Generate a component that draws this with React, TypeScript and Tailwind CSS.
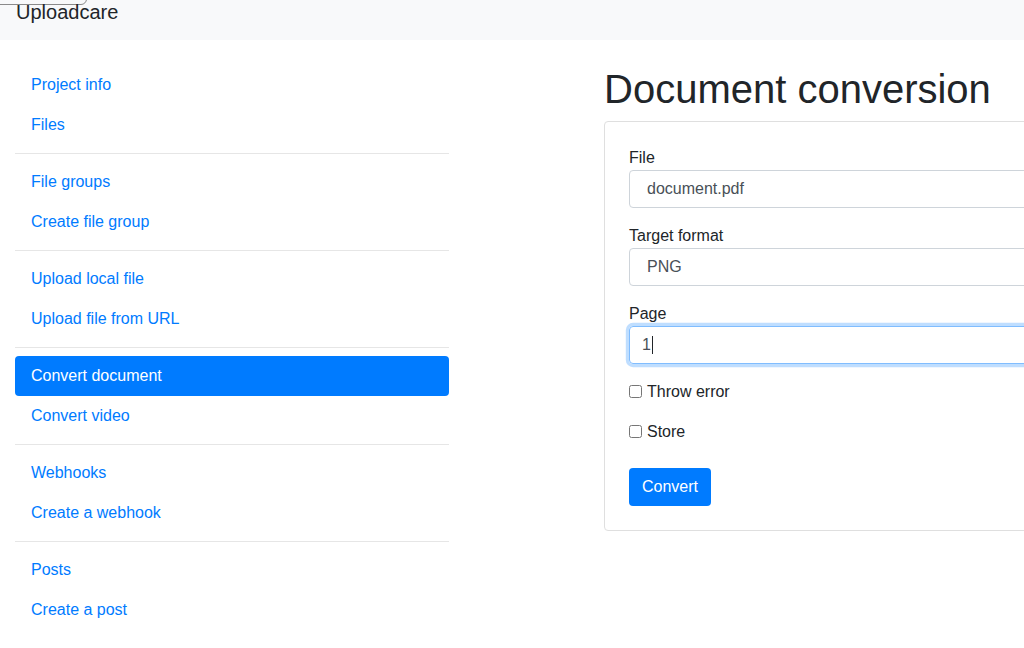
import React from "react";

const groups = [
  ["Project info", "Files"],
  ["File groups", "Create file group"],
  ["Upload local file", "Upload file from URL"],
  ["Convert document", "Convert video"],
  ["Webhooks", "Create a webhook"],
  ["Posts", "Create a post"],
];

const active = "Convert document";

function Sidebar() {
  return (
    <nav className="w-[434px] ml-[15px] shrink-0">
      {groups.map((group, i) => (
        <div key={i}>
          {i > 0 && <hr className="my-2 border-0 border-t border-[#e6e6e6]" />}
          {group.map((label) => (
            <a
              key={label}
              href="#"
              className={
                label === active
                  ? "block px-4 py-2 leading-6 rounded bg-[#007bff] text-white"
                  : "block px-4 py-2 leading-6 rounded text-[#007bff]"
              }
            >
              {label}
            </a>
          ))}
        </div>
      ))}
    </nav>
  );
}

function Field({ label, value, focused }: { label: string; value: string; focused?: boolean }) {
  return (
    <div className="mb-4">
      <div className="leading-6 text-[#212529]">{label}</div>
      <div
        className={
          focused
            ? "h-[38px] flex items-center pl-[12px] border border-[#80bdff] rounded text-[#495057] shadow-[0_0_0_0.2rem_rgba(0,123,255,0.25)]"
            : "h-[38px] flex items-center pl-[17px] border border-[#ced4da] rounded text-[#495057]"
        }
      >
        {value}
        {focused && <span className="ml-[1px] w-px h-[18px] bg-[#212529]" />}
      </div>
    </div>
  );
}

function Check({ label }: { label: string }) {
  return (
    <label className="mb-4 flex items-center gap-[5px] leading-6 text-[#212529]">
      <input type="checkbox" className="relative -top-px w-[13px] h-[13px] m-0" />
      {label}
    </label>
  );
}

export default function App() {
  return (
    <div className="relative w-[1024px] h-[648px] overflow-hidden bg-white font-['Liberation_Sans',Arial,sans-serif] text-base">
      <header className="relative h-10 bg-[#f8f9fa] pl-4">
        <div className="absolute -left-[10px] -top-[30px] w-[97px] h-[35px] border border-[#8a8a8a] rounded-[6px]" />
        <span className="relative -top-[3px] block text-xl leading-[30px] text-[#212529]">Uploadcare</span>
      </header>
      <div className="flex pt-[25px]">
        <Sidebar />
        <main className="ml-[155px] w-[620px] shrink-0">
          <h1 className="text-[40px] leading-[48px] mb-2 text-[#212529]">Document conversion</h1>
          <div className="border border-[#dfdfdf] rounded px-6 pt-6 pb-6">
            <Field label="File" value="document.pdf" />
            <Field label="Target format" value="PNG" />
            <Field label="Page" value="1" focused />
            <Check label="Throw error" />
            <Check label="Store" />
            <button className="mt-2 h-[38px] px-[13px] rounded bg-[#007bff] text-white leading-6">Convert</button>
          </div>
        </main>
      </div>
    </div>
  );
}
